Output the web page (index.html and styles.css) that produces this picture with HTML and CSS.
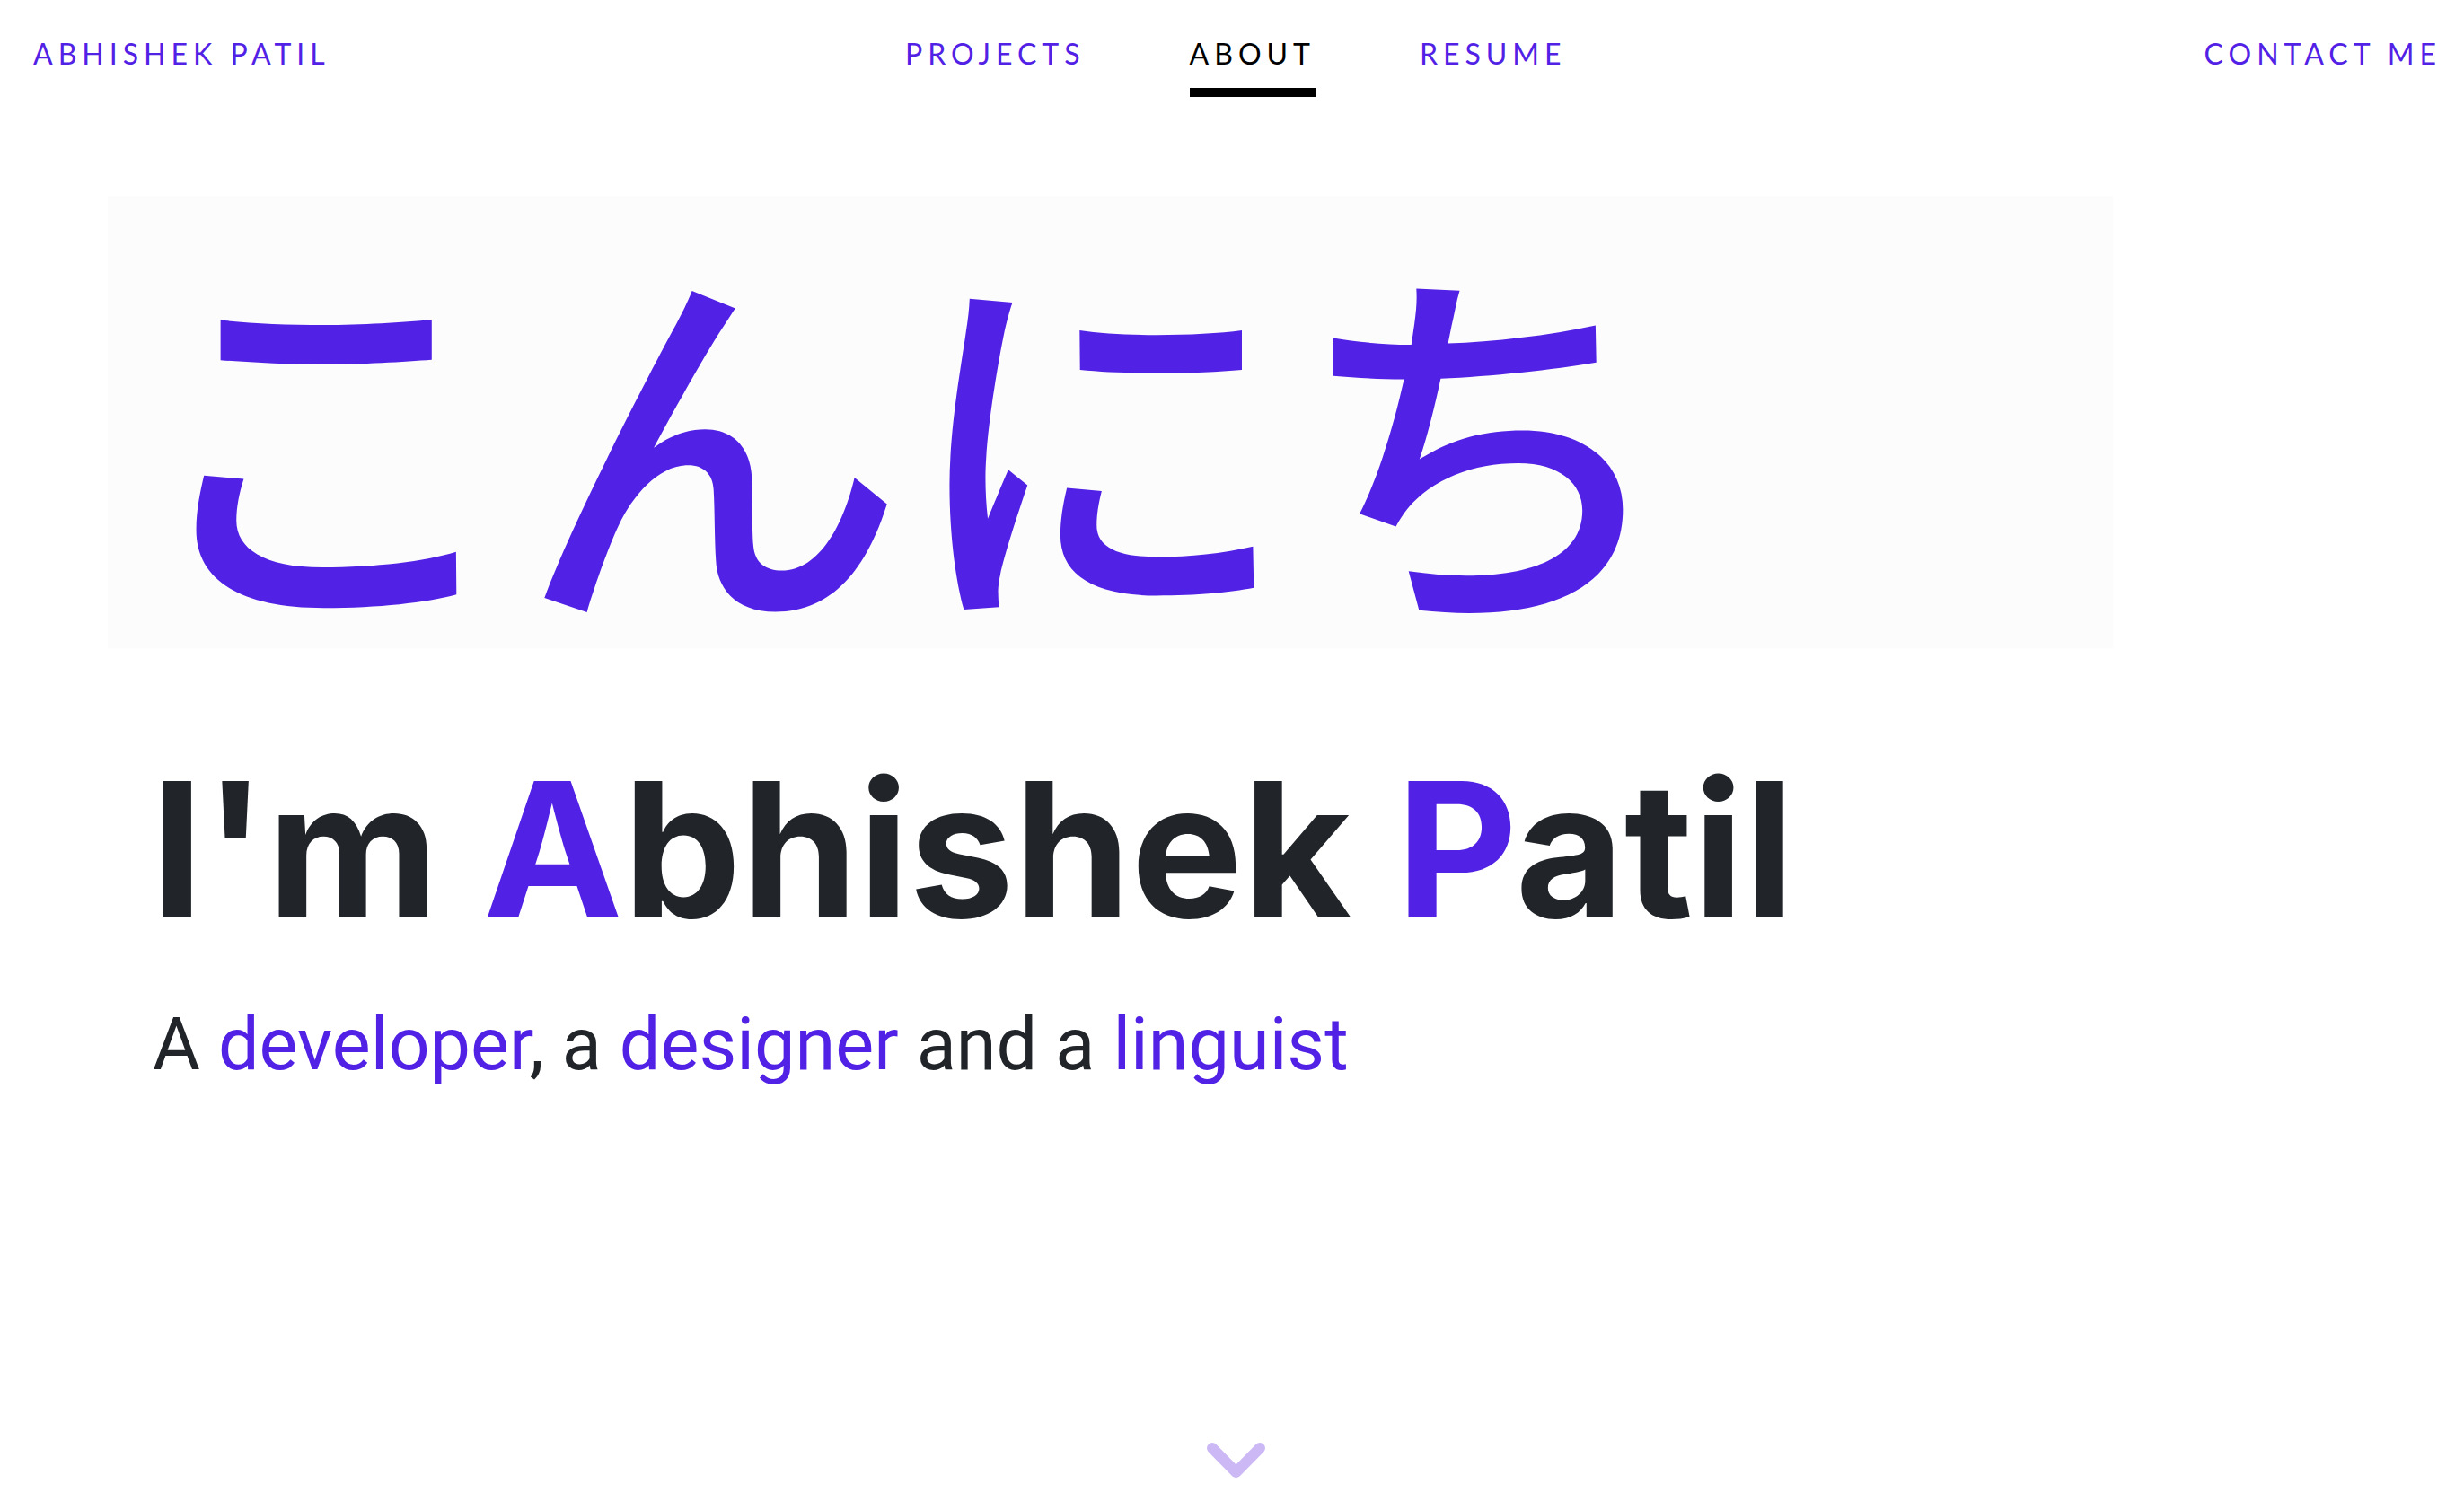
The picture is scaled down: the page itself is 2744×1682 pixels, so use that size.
FILE: index.html
```html
<!DOCTYPE html>
<html lang="en">
<head>
<meta charset="utf-8">
<title>Abhishek Patil</title>
<link rel="stylesheet" href="styles.css">
</head>
<body>
<header class="topbar">
  <a class="brand" href="#">Abhishek Patil</a>
  <nav class="menu">
    <a class="menu-link" href="#">Projects</a>
    <a class="menu-link is-active" href="#">About</a>
    <a class="menu-link" href="#">Resume</a>
  </nav>
  <a class="contact" href="#">Contact me</a>
</header>
<main class="hero">
  <div class="greeting"><span class="greeting-text" lang="ja">こんにち</span></div>
  <div class="intro">
    <h1 class="title">I'm <span class="accent">A</span>bhishek <span class="accent">P</span>atil</h1>
    <p class="tagline">A <span class="accent">developer</span>, a <span class="accent">designer</span> and a <span class="accent">linguist</span></p>
  </div>
  <div class="scroll-hint">
    <svg class="chevron" width="65" height="40" viewBox="0 0 65 40" aria-hidden="true">
      <path d="M6 6 L32.5 33 L59 6" fill="none" stroke="#cbb8f5" stroke-width="12" stroke-linecap="round" stroke-linejoin="round"/>
    </svg>
  </div>
</main>
</body>
</html>
```
FILE: styles.css
```css
html, body {
  margin: 0;
  padding: 0;
  background: #ffffff;
}

a {
  text-decoration: none;
}

.topbar {
  display: grid;
  grid-template-columns: 971px auto 1fr;
  align-items: start;
  padding: 41px 25px 0 37px;
  font-family: Lato, "Liberation Sans", sans-serif;
  font-size: 32px;
  line-height: 1.2;
  letter-spacing: 6px;
  text-transform: uppercase;
}

.brand,
.menu-link,
.contact {
  color: #5221e6;
}

.menu {
  display: flex;
  gap: 116px;
}

.menu-link {
  display: block;
  padding-bottom: 19px;
}

.menu-link.is-active {
  color: #000000;
  border-bottom: 10px solid #000000;
}

.contact {
  justify-self: end;
}

.hero {
  padding: 0;
}

.greeting {
  box-sizing: border-box;
  width: 2233px;
  height: 504px;
  margin: 110px 0 0 120px;
  padding: 43px 0 0 28px;
  background: #fcfcfc;
}

.greeting-text {
  display: block;
  font-family: "Noto Sans CJK JP", sans-serif;
  font-weight: 500;
  font-size: 430px;
  line-height: 1;
  color: #5221e6;
  white-space: nowrap;
}

.intro {
  padding: 120px 0 0 168px;
  color: #212529;
}

.title {
  margin: 0;
  font-family: Inter, "Liberation Sans", sans-serif;
  font-weight: 700;
  font-size: 209px;
  line-height: 1;
  color: #212529;
}

.tagline {
  margin: 72px 0 0 2px;
  font-family: Roboto, "Liberation Sans", sans-serif;
  font-weight: 400;
  font-size: 81px;
  line-height: 1;
  color: #212529;
}

.accent {
  color: #5221e6;
}

.scroll-hint {
  display: flex;
  justify-content: center;
  padding: 403px 0 0 8px;
}

.chevron {
  display: block;
}
```
